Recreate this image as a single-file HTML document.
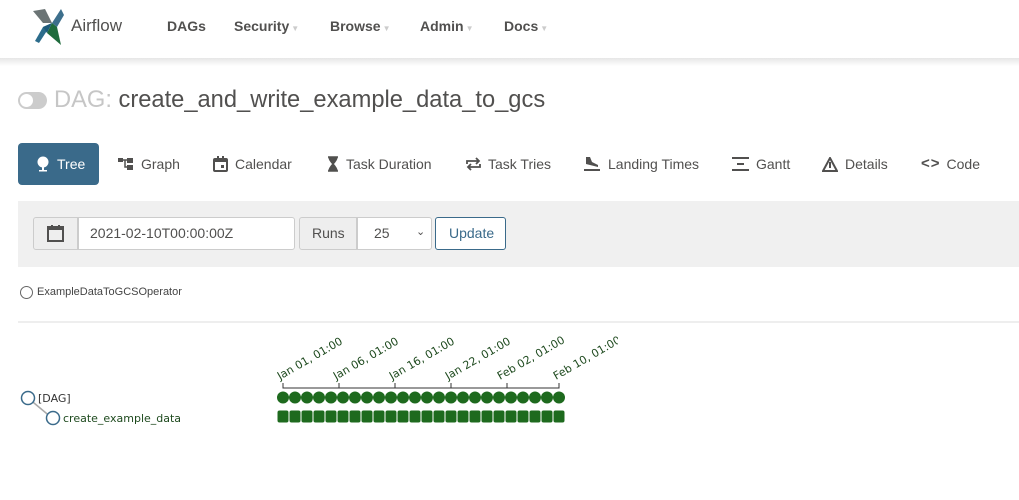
<!DOCTYPE html>
<html><head><meta charset="utf-8"><style>
*{box-sizing:border-box;margin:0;padding:0}
body{width:1019px;height:500px;overflow:hidden;background:#fff;font-family:"Liberation Sans",Arial,sans-serif;color:#51504f;position:relative}
.abs{position:absolute}
.nav{font-size:14px;font-weight:bold;color:#51504f;top:18px}
.caret{font-weight:normal;color:#ccc;font-size:8px;margin-left:2px}
.tab{position:absolute;top:143px;height:42px;line-height:40px;font-size:14px;color:#51504f;display:flex;align-items:center;gap:7px}
.tab svg{display:block}
</style></head><body>
<svg class="abs" style="left:31px;top:7px" width="38" height="38" viewBox="0 0 38 38">
<polygon points="2,4 14,2 21,16 12,16" fill="#6b7475"/>
<polygon points="21,16 30,2 33,8 26,20" fill="#3d6f8c"/>
<polygon points="21,16 12,20 4,34 8,36" fill="#2c6c8b"/>
<polygon points="21,16 26,20 30,38 16,26" fill="#1f6b3c"/>
<polygon points="21,16 16,26 12,20" fill="#1d5a7a"/>
</svg>
<div class="abs" style="left:71px;top:16px;font-size:17px;color:#51504f">Airflow</div>
<div class="abs nav" style="left:167px">DAGs</div>
<div class="abs nav" style="left:234px">Security<span class="caret">▼</span></div>
<div class="abs nav" style="left:330px">Browse<span class="caret">▼</span></div>
<div class="abs nav" style="left:420px">Admin<span class="caret">▼</span></div>
<div class="abs nav" style="left:504px">Docs<span class="caret">▼</span></div>
<div class="abs" style="left:0;top:58px;width:1019px;height:8px;background:linear-gradient(#e6e6e6,#fff)"></div>
<div class="abs" style="left:18px;top:92px;width:29px;height:17px;border-radius:9px;background:#ccc"></div>
<div class="abs" style="left:20px;top:94px;width:13px;height:13px;border-radius:50%;background:#fff"></div>
<div class="abs" style="left:54px;top:87px;font-size:23.7px;color:#51504f;white-space:nowrap"><span style="color:#c6c6c6">DAG:</span> create_and_write_example_data_to_gcs</div>
<div class="abs" style="left:18px;top:143px;width:81px;height:42px;background:#3a6a8a;border-radius:4px"></div>
<div class="tab" style="left:36px;color:#fff"><svg width="14" height="16" viewBox="0 0 14 16"><circle cx="7" cy="6" r="5.5" fill="#fff"/><rect x="6" y="10" width="2" height="5" fill="#fff"/><rect x="3" y="14" width="8" height="1.5" fill="#fff"/></svg>Tree</div>
<div class="tab" style="left:118px"><svg width="16" height="14" viewBox="0 0 16 14"><rect x="0" y="1" width="5" height="4" fill="#51504f"/><rect x="9" y="1" width="6" height="5" fill="#51504f"/><rect x="9" y="8" width="6" height="5" fill="#51504f"/><path d="M5 3H9M7 3V10H9" stroke="#51504f" fill="none" stroke-width="1.5"/></svg>Graph</div>
<div class="tab" style="left:213px"><svg width="15" height="16" viewBox="0 0 15 16"><rect x="1" y="3" width="13" height="12" rx="1" fill="none" stroke="#51504f" stroke-width="2"/><rect x="1" y="3" width="13" height="3" fill="#51504f"/><rect x="4" y="0" width="2" height="4" fill="#51504f"/><rect x="9" y="0" width="2" height="4" fill="#51504f"/><rect x="8" y="9" width="3" height="3" fill="#51504f"/></svg>Calendar</div>
<div class="tab" style="left:327px"><svg width="12" height="16" viewBox="0 0 12 16"><path d="M1 1H11M1 15H11M2 1C2 6 10 10 10 15H2C2 10 10 6 10 1" fill="#51504f" stroke="#51504f" stroke-width="1.5"/></svg>Task Duration</div>
<div class="tab" style="left:466px"><svg width="15" height="14" viewBox="0 0 15 14"><path d="M1 7V4H12M10 1L13 4 10 7M14 7V10H3M5 7L2 10 5 13" fill="none" stroke="#51504f" stroke-width="1.8"/></svg>Task Tries</div>
<div class="tab" style="left:583px"><svg width="18" height="16" viewBox="0 0 18 16"><path d="M3 1V8L15 11V9L9 6 7 1Z" fill="#51504f"/><rect x="1" y="13" width="16" height="2" fill="#51504f"/></svg>Landing Times</div>
<div class="tab" style="left:732px"><svg width="17" height="16" viewBox="0 0 17 16"><rect x="0" y="1" width="17" height="2" fill="#51504f"/><rect x="5" y="7" width="7" height="2" fill="#51504f"/><rect x="0" y="13" width="17" height="2" fill="#51504f"/></svg>Gantt</div>
<div class="tab" style="left:822px"><svg width="16" height="15" viewBox="0 0 16 15"><path d="M8 1L15 14H1Z" fill="none" stroke="#51504f" stroke-width="2"/><path d="M8 5V11" stroke="#51504f" stroke-width="2"/></svg>Details</div>
<div class="tab" style="left:921px;gap:6px"><span style="font-size:15px;font-weight:bold;letter-spacing:1px">&lt;&gt;</span>Code</div>
<div class="abs" style="left:18px;top:201px;width:1001px;height:66px;background:#f0f0f0"></div>
<div class="abs" style="left:33px;top:217px;width:45px;height:33px;background:#eee;border:1px solid #ccc;border-radius:3px 0 0 3px"></div>
<svg class="abs" style="left:47px;top:224px" width="17" height="18" viewBox="0 0 17 18"><rect x="1" y="3" width="15" height="14" fill="none" stroke="#51504f" stroke-width="2"/><rect x="1" y="3" width="15" height="3" fill="#51504f"/><rect x="4" y="1" width="2" height="3" fill="#51504f"/><rect x="11" y="1" width="2" height="3" fill="#51504f"/></svg>
<div class="abs" style="left:78px;top:217px;width:217px;height:33px;background:#fff;border:1px solid #ccc;border-radius:0 3px 3px 0;padding:7px 11px;font-size:14px;color:#51504f">2021-02-10T00:00:00Z</div>
<div class="abs" style="left:299px;top:217px;width:58px;height:33px;background:#eee;border:1px solid #ccc;border-radius:3px 0 0 3px;padding:7px 12px;font-size:14px">Runs</div>
<div class="abs" style="left:357px;top:217px;width:75px;height:33px;background:#fff;border:1px solid #ccc;border-radius:0 3px 3px 0;padding:7px 16px;font-size:14px">25<span style="position:absolute;left:58px;top:7px;font-size:11px">⌄</span></div>
<div class="abs" style="left:435px;top:217px;width:71px;height:33px;background:#fff;border:1px solid #3a6a8a;border-radius:3px;padding:7px 13px;font-size:14px;color:#3a6a8a">Update</div>
<div class="abs" style="left:20px;top:286px;width:13px;height:13px;border:1px solid #666;border-radius:50%"></div>
<div class="abs" style="left:37px;top:286px;font-size:11px;color:#444">ExampleDataToGCSOperator</div>
<div class="abs" style="left:18px;top:321px;width:1001px;height:2px;background:#eee"></div>
<svg class="abs" style="left:0;top:330px" width="618" height="110" viewBox="0 330 618 110">
<defs>
<pattern id="c" x="277" y="391" width="12" height="13" patternUnits="userSpaceOnUse"><circle cx="6" cy="6.5" r="6" fill="#1e6a1e"/></pattern>
<pattern id="s" x="277" y="410" width="12" height="13" patternUnits="userSpaceOnUse"><rect x="0.5" y="0.5" width="11" height="12" rx="2" fill="#1e6a1e"/></pattern>
</defs>
<line x1="28" y1="398" x2="52" y2="418" stroke="#aaa" stroke-width="1.5"/>
<circle cx="28" cy="398" r="6.5" fill="#fff" stroke="#3a6a8a" stroke-width="1.5"/>
<circle cx="53" cy="418" r="6.5" fill="#fff" stroke="#3a6a8a" stroke-width="1.5"/>
<text x="38" y="402" font-size="11" fill="#333" font-family="DejaVu Sans,sans-serif">[DAG]</text>
<text x="63" y="422" font-size="11" fill="#1e4a1e" font-family="DejaVu Sans,sans-serif">create_example_data</text>
<path d="M283 383V388H559V383M339 388V383M395 388V383M451 388V383M507 388V383" stroke="#333" fill="none"/>
<g font-size="11" fill="#1e4a1e" font-family="DejaVu Sans,sans-serif">
<text transform="translate(280,380) rotate(-30)">Jan 01, 01:00</text>
<text transform="translate(336,380) rotate(-30)">Jan 06, 01:00</text>
<text transform="translate(392,380) rotate(-30)">Jan 16, 01:00</text>
<text transform="translate(448,380) rotate(-30)">Jan 22, 01:00</text>
<text transform="translate(500,380) rotate(-30)">Feb 02, 01:00</text>
<text transform="translate(556,380) rotate(-30)">Feb 10, 01:00</text>
</g>
<rect x="277" y="391" width="288" height="13" fill="url(#c)"/>
<rect x="277" y="410" width="288" height="13" fill="url(#s)"/>
</svg>
</body></html>
